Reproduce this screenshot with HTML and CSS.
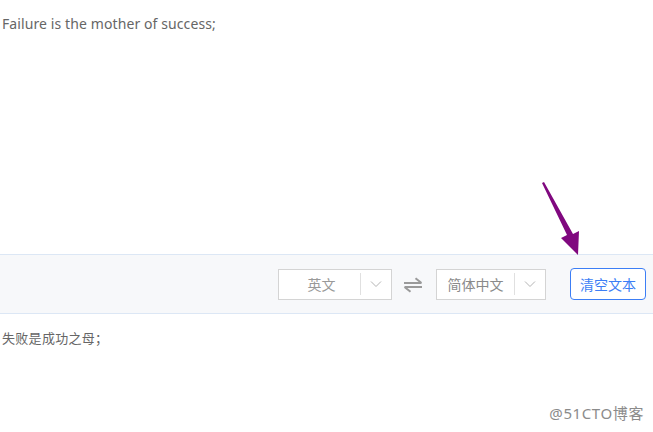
FILE: index.html
```html
<!DOCTYPE html>
<html>
<head>
<meta charset="utf-8">
<link rel="stylesheet" href="styles.css">
</head>
<body>
<div class="page">
  <div class="source">Failure is the mother of success;</div>
  <div class="toolbar">
    <div class="select sel-from">
      <span class="sel-label">英文</span>
      <span class="sel-div"></span>
      <span class="sel-arrow"><svg width="12" height="8" viewBox="0 0 12 8"><path d="M1 1.5 L6 6.5 L11 1.5" fill="none" stroke="#b4b4b4" stroke-width="1"/></svg></span>
    </div>
    <div class="swap"><svg width="20" height="16" viewBox="0 0 20 16"><path d="M1 6 H18.5 M12.5 1.2 L18.5 6" fill="none" stroke="#9a9a9a" stroke-width="2"/><path d="M19 10 H1.5 M7.5 14.8 L1.5 10" fill="none" stroke="#9a9a9a" stroke-width="2"/></svg></div>
    <div class="select sel-to">
      <span class="sel-label">简体中文</span>
      <span class="sel-div"></span>
      <span class="sel-arrow"><svg width="12" height="8" viewBox="0 0 12 8"><path d="M1 1.5 L6 6.5 L11 1.5" fill="none" stroke="#b4b4b4" stroke-width="1"/></svg></span>
    </div>
    <button class="clear-btn">清空文本</button>
  </div>
  <div class="result">失败是成功之母；</div>
  <div class="watermark">@51CTO博客</div>
  <svg class="annot-arrow" width="60" height="90" viewBox="0 0 60 90"><path d="M6 4 L31 56 L25 59 L42 76 L43 52 L37 55 L8 3 Z" fill="#80087f"/></svg>
</div>
</body>
</html>
```
FILE: styles.css
```css
html, body {
  margin: 0;
  padding: 0;
  background: #ffffff;
}
.page {
  position: relative;
  width: 653px;
  height: 432px;
  overflow: hidden;
  font-family: "Noto Sans", "Noto Sans CJK SC", sans-serif;
}
.source {
  height: 254px;
  box-sizing: border-box;
  padding: 14px 0 0 2px;
  font-size: 14px;
  line-height: 20px;
  letter-spacing: 0.1px;
  color: #666666;
}
.toolbar {
  height: 58px;
  border-top: 1px solid #dce7f5;
  border-bottom: 1px solid #dce7f5;
  background: #f7f8fa;
  display: flex;
  align-items: center;
  justify-content: flex-end;
  padding-right: 7px;
}
.select {
  height: 31px;
  box-sizing: border-box;
  border: 1px solid #d4d4d4;
  background: #ffffff;
  display: flex;
  align-items: center;
}
.sel-from { width: 114px; }
.sel-to { width: 110px; }
.sel-label {
  flex: 1;
  text-align: center;
  font-family: "Noto Sans CJK SC", sans-serif;
  font-size: 14px;
  color: #999999;
}
.sel-from .sel-label { padding-left: 4px; }
.sel-to .sel-label { color: #8a8a8a; }
.sel-div {
  width: 1px;
  height: 22px;
  background: #e0e0e0;
}
.sel-arrow {
  width: 30px;
  display: flex;
  justify-content: center;
  align-items: center;
}
.swap {
  width: 44px;
  display: flex;
  justify-content: center;
  align-items: center;
  margin-top: 2px;
  padding-right: 3px;
  box-sizing: border-box;
}
.clear-btn {
  margin-left: 24px;
  width: 76px;
  height: 32px;
  box-sizing: border-box;
  border: 1px solid #3c7ef5;
  border-radius: 4px;
  background: #ffffff;
  color: #3c7ef5;
  font-family: "Noto Sans CJK SC", sans-serif;
  font-size: 14px;
  padding: 0;
}
.result {
  padding: 14px 0 0 2px;
  font-family: "Noto Sans CJK SC", sans-serif;
  font-size: 13px;
  line-height: 20px;
  letter-spacing: 0.3px;
  color: #666666;
}
.watermark {
  position: absolute;
  right: 9px;
  bottom: 9px;
  font-family: "Noto Sans", "Noto Sans CJK SC", sans-serif;
  font-size: 15px;
  letter-spacing: 0.6px;
  color: #777777;
  opacity: 0.85;
}
.annot-arrow {
  position: absolute;
  left: 536px;
  top: 179px;
}
```
